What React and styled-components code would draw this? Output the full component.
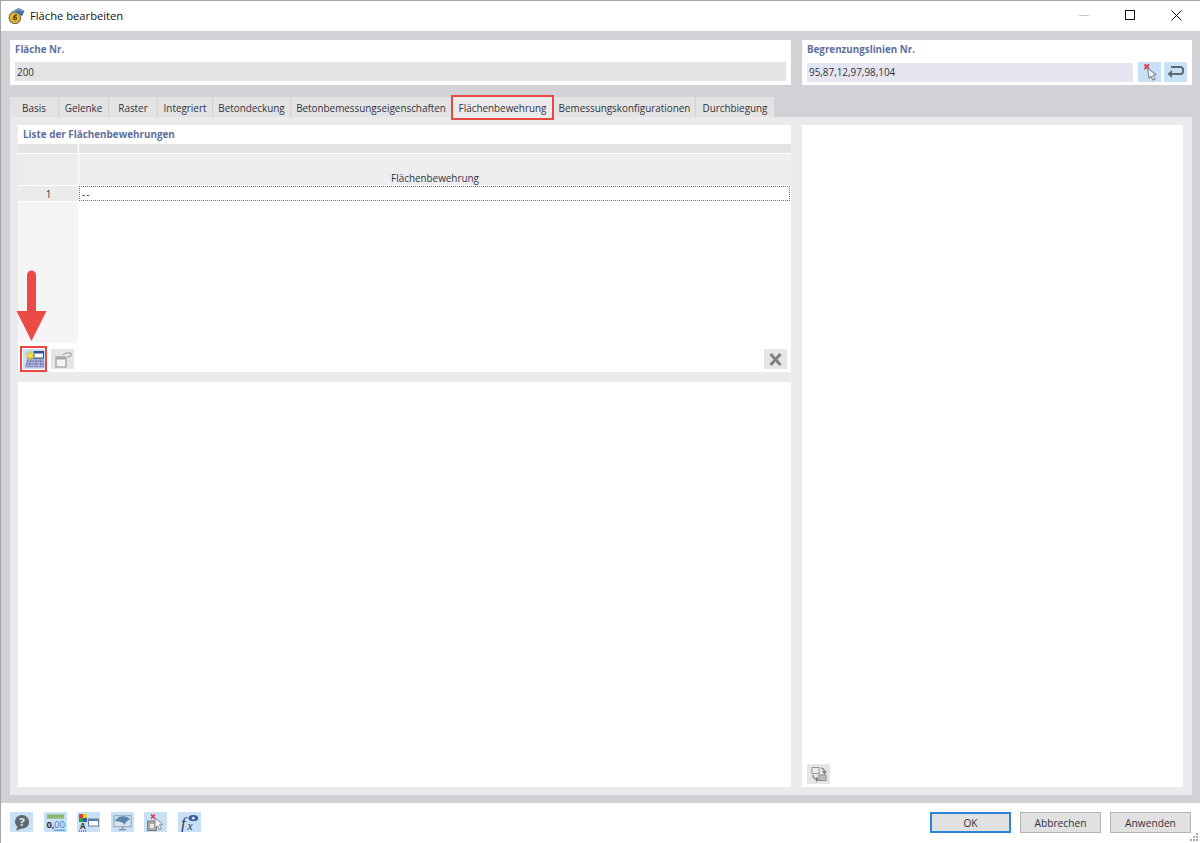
import React from "react"
import styled, { createGlobalStyle } from "styled-components"

const GlobalStyle = createGlobalStyle`
  html, body {
    margin: 0;
    padding: 0;
    background: #ffffff;
    overflow: hidden;
  }
  * {
    box-sizing: border-box;
  }
`
const Window = styled.div`
  width: 1200px;
  height: 843px;
  display: flex;
  flex-direction: column;
  border-top: 1px solid #a6a6a6;
  border-left: 1px solid #a6a6a6;
  background: #ffffff;
  font-family: "Open Sans", "Noto Sans", sans-serif;
  font-size: 9.9px;
  color: #33333d;
  position: relative;
`
const TitleBar = styled.div`
  height: 30px;
  display: flex;
  align-items: center;
  padding: 0 0 2px 7px;
  flex-shrink: 0;
`
const WindowTitle = styled.div`
  margin-left: 5px;
  flex-grow: 1;
  font-size: 11.2px;
  color: #111111;
`
const WindowControls = styled.div`
  display: flex;
  align-items: center;
  margin-right: 1px;
`
const WindowControl = styled.div`
  width: 46px;
  height: 28px;
  display: flex;
  justify-content: center;
  align-items: center;
`
const Body = styled.div`
  height: 772px;
  padding: 9px 8px 8px 9px;
  background: #d2d2d6;
  display: flex;
  flex-direction: column;
`
const TopRow = styled.div`
  display: flex;
  gap: 11px;
  height: 45px;
`
const FieldPanel = styled.div`
  width: ${props => props.$width}px;
  background: #ffffff;
  padding: 0 5px;
  display: flex;
  flex-direction: column;
`
const SectionLabel = styled.div`
  height: 18px;
  margin-bottom: 4px;
  display: flex;
  align-items: center;
  font-size: 9.8px;
  font-weight: 700;
  color: #5f6f9c;
`
const FieldRow = styled.div`
  display: flex;
  align-items: center;
`
const FieldValue = styled.div`
  height: 19px;
  flex-grow: 1;
  display: flex;
  align-items: center;
  padding-left: 2px;
  background: ${props => props.$bg};
`
const Tabs = styled.div`
  display: flex;
  gap: 1px;
  height: 20px;
  margin-top: 12px;
`
const Tab = styled.div`
  width: ${props => props.$width}px;
  display: flex;
  justify-content: center;
  align-items: center;
  padding-top: 1px;
  position: relative;
  background: ${props => (props.$active ? "#ebebeb" : "#e3e3e3")};
  ${props => props.$active && `
    &::after {
      content: "";
      position: absolute;
      inset: -2px -1px -3px -1px;
      border: 2.5px solid #e8483f;
    }
  `}
`
const TabPanel = styled.div`
  height: 678px;
  padding: 8px 9px 8px 8px;
  background: #ebebeb;
  display: flex;
  gap: 11px;
`
const LeftColumn = styled.div`
  width: 773px;
  display: flex;
  flex-direction: column;
  gap: 10px;
`
const RightColumn = styled.div`
  flex-grow: 1;
  background: #ffffff;
  display: flex;
  align-items: flex-end;
  padding: 0 0 3px 5px;
`
const ListPanel = styled.div`
  height: 247px;
  background: #ffffff;
  display: flex;
  flex-direction: column;
`
const ListTitle = styled.div`
  height: 19px;
  display: flex;
  align-items: center;
  padding: 0 0 1px 5px;
  font-size: 9.9px;
  font-weight: 700;
  color: #5f6f9c;
`
const Table = styled.div`
  height: 199px;
  display: grid;
  grid-template-columns: 60px 1fr;
  grid-template-rows: 9px 31px 15px 1fr;
  column-gap: 1px;
  row-gap: 1px;
`
const Strip = styled.div`
  background: #e4e4e4;
`
const HeaderCorner = styled.div`
  background: #ececec;
`
const HeaderCell = styled.div`
  background: #eeeeee;
  display: flex;
  justify-content: center;
  align-items: flex-end;
`
const RowNumber = styled.div`
  background: #ebebeb;
  display: flex;
  justify-content: center;
  align-items: center;
  padding-left: 1px;
`
const EditCell = styled.div`
  background: #ffffff;
  border: 1px dotted #707070;
  margin-right: 1px;
  display: flex;
  align-items: center;
  padding-left: 2px;
  letter-spacing: 1px;
`
const RowFiller = styled.div`
  background: #f5f5f5;
`
const Toolbar = styled.div`
  height: 29px;
  display: flex;
  align-items: flex-start;
  padding: 6px 4px 0 5px;
  gap: 5px;
`
const IconButton = styled.div`
  width: 23px;
  height: 20px;
  flex-shrink: 0;
  display: flex;
  justify-content: center;
  align-items: center;
  position: relative;
  background: ${props => (props.$disabled ? "#e6e6e6" : "#c8e1f6")};
  ${props => props.$pushRight && "margin-left: auto;"}
  ${props => props.$marked && `
    &::after {
      content: "";
      position: absolute;
      inset: -3px -1px -3px -3px;
      border: 2.5px solid #e8483f;
    }
  `}
`
const FieldButtons = styled.div`
  display: flex;
  gap: 3px;
  margin-left: 5px;
`
const DetailPanel = styled.div`
  flex-grow: 1;
  background: #ffffff;
`
const Arrow = styled.svg`
  position: absolute;
  left: 15px;
  top: 267px;
`
const Footer = styled.div`
  flex-grow: 1;
  display: flex;
  align-items: flex-start;
  padding: 9px 8px 0 9px;
`
const FooterIcons = styled.div`
  display: flex;
  gap: 10.6px;
  flex-grow: 1;
`
const FooterButtons = styled.div`
  display: flex;
  gap: 9px;
  margin-right: 1px;
`
const DialogButton = styled.div`
  width: 81px;
  height: 21px;
  display: flex;
  justify-content: center;
  align-items: center;
  background: #e1e1e1;
  font-size: 10.2px;
  border: ${props => (props.$primary ? "2px solid #2a86d8" : "1px solid #b4b4b4")};
`
const Grip = styled.svg`
  position: absolute;
  right: 1px;
  bottom: 1px;
`

const TitleIcon = () => (
  <svg width="17" height="17" viewBox="0 0 16 16">
    <circle cx="6.5" cy="10" r="5.5" fill="#e0b52c" stroke="#6f6a55" strokeWidth="1" />
    <path d="M8.5 7.6 C6.6 7.2 5.2 8.6 5.2 10.6 C5.2 12.4 8 12.4 8 10.6 C8 9.2 6 9.2 5.4 10.2" fill="none" stroke="#5a4a10" strokeWidth="1.2" />
    <path d="M3 4.5 L10 1 L15.5 3.5 L13.5 8.5 L9 6 Z" fill="#48709f" />
    <path d="M4 5 L10 2.2 L14 4" fill="none" stroke="#8fb0d2" strokeWidth="1" />
  </svg>
)
const PickIcon = () => (
  <svg width="23" height="20" viewBox="0 0 23 20">
    <path d="M6.5 2.5 L11 7 M11 2.5 L6.5 7" stroke="#e8333f" strokeWidth="1.8" />
    <path d="M9.5 6 L11 16 L13 14.5 L15 18 L17 17 L15 13.5 L18 12.5 Z" fill="#f4f4f4" stroke="#83888e" strokeWidth="1.1" />
  </svg>
)
const ReturnIcon = () => (
  <svg width="23" height="20" viewBox="0 0 23 20">
    <path d="M7 5 H16.5 C20 5 20 12 16.5 12 H5" fill="none" stroke="#5d6a75" strokeWidth="2" />
    <path d="M8 8 L3.5 12 L8 16 Z" fill="#5d6a75" />
  </svg>
)
const NewIcon = () => (
  <svg width="21" height="18" viewBox="0 0 21 18">
    <path d="M4 8 H19 L20 17 H1.5 Z" fill="#aab0d8" stroke="#7d84ad" strokeWidth="0.7" />
    <path d="M3 11 H19.5 M2.5 14 H20 M7 8 L5.5 17 M12 8 L12 17 M16 8 L17 17" stroke="#5a5f9c" strokeWidth="0.9" strokeDasharray="1.5 1.2" />
    <rect x="10" y="1.5" width="9.5" height="6.5" fill="#ffffff" stroke="#34507f" />
    <rect x="10" y="1.5" width="9.5" height="2" fill="#2c4f96" />
    <path d="M6.5 0.5 L7.5 3.5 L10.5 3 L8.7 5.5 L10.5 8 L7.5 7.5 L6.5 10.5 L5 7.5 L2 8 L3.8 5.5 L2 3 L5 3.5 Z" fill="#eee04a" stroke="#a9a92e" strokeWidth="0.5" />
  </svg>
)
const CopyIcon = () => (
  <svg width="21" height="18" viewBox="0 0 21 18">
    <rect x="4" y="7" width="10" height="10" fill="#f3f3f3" stroke="#8c8c8c" />
    <rect x="4" y="7" width="10" height="2.5" fill="#a8a8a8" />
    <path d="M11 5 L14 3 L19 3 L19 6 L15 7" fill="#e6e6e6" stroke="#9a9a9a" />
  </svg>
)
const DeleteIcon = () => (
  <svg width="23" height="19" viewBox="0 0 23 19">
    <path d="M6.5 4 L16.5 15 M16.5 4 L6.5 15" stroke="#808080" strokeWidth="3" />
  </svg>
)
const SwapIcon = () => (
  <svg width="23" height="20" viewBox="0 0 23 20">
    <rect x="5" y="3.5" width="7" height="6" fill="#ececec" stroke="#969696" />
    <rect x="12" y="11" width="7" height="5.5" fill="#bdbdbd" stroke="#8a8a8a" />
    <path d="M14 4 C16.5 4 17.5 6 17.5 8.5 M15.5 7 L17.5 9.5 L19.5 7" fill="none" stroke="#7a7a7a" strokeWidth="1.2" />
    <path d="M6 11 C6 14 7.5 15.5 10.5 15.5 M9 13.5 L11 15.5 L9 17.5" fill="none" stroke="#7a7a7a" strokeWidth="1.2" />
  </svg>
)
const HelpIcon = () => (
  <svg width="23" height="19" viewBox="0 0 23 19">
    <path d="M12 2 C16 2 19 5 19 9 C19 13 16 15.5 12 15.5 L6 17.5 L7.5 13.5 C5.5 12 5 10.5 5 9 C5 5 8 2 12 2 Z" fill="#63686b" />
    <text x="12" y="13" textAnchor="middle" fontFamily="Open Sans" fontWeight="800" fontSize="11" fill="#c8e1f6">?</text>
  </svg>
)
const NumberIcon = () => (
  <svg width="24" height="19" viewBox="0 0 24 19">
    <rect x="3" y="1" width="18" height="4.5" fill="#8db872" />
    <text x="2.5" y="15" fontFamily="Open Sans" fontWeight="700" fontSize="10" fill="#333333">0,</text>
    <text x="10.5" y="15" fontFamily="Open Sans" fontSize="10" fill="#3c7cdc">00</text>
    <path d="M10.5 17.5 H22" stroke="#3c7cdc" />
  </svg>
)
const DisplayIcon = () => (
  <svg width="23" height="19" viewBox="0 0 23 19">
    <rect x="2" y="1" width="4" height="4" fill="#e03b30" />
    <rect x="6" y="1" width="4" height="4" fill="#e6d02c" />
    <rect x="2" y="5" width="4" height="4" fill="#2f9e44" />
    <rect x="6" y="5" width="4" height="4" fill="#3058c0" />
    <text x="3" y="15.5" fontFamily="Open Sans" fontWeight="700" fontSize="8" fill="#333333">A</text>
    <path d="M2 18 H10" stroke="#333333" strokeDasharray="1 1" />
    <rect x="11.5" y="6" width="10" height="7" fill="#ffffff" stroke="#6d7f96" />
    <rect x="11.5" y="6" width="10" height="2" fill="#5a7fb0" />
  </svg>
)
const ViewIcon = () => (
  <svg width="24" height="19" viewBox="0 0 24 19">
    <rect x="3" y="2.5" width="18" height="11.5" fill="#d7e4ef" stroke="#8b9bab" />
    <path d="M4 8 C7 3 14 1 20 6 C17 7 15.5 9 14 12 C12.5 9 9 8.5 4 8 Z" fill="#5a86b0" />
    <path d="M12 14 V16.5 M8 17 H16" stroke="#7d8d9a" strokeWidth="1.4" />
  </svg>
)
const ClearIcon = () => (
  <svg width="23" height="19" viewBox="0 0 23 19">
    <path d="M7 1.5 L11 5.5 M11 1.5 L7 5.5" stroke="#e8333f" strokeWidth="1.6" />
    <rect x="3.5" y="8" width="9" height="9.5" fill="#a9a9a9" stroke="#7e7e7e" />
    <rect x="6" y="11" width="4" height="4" fill="#ececec" />
    <path d="M11 5 L11 15 L13.5 13 L15.5 17 L17.5 16 L15.5 12 L19 11.5 Z" fill="#f4f4f4" stroke="#85898f" />
  </svg>
)
const FormulaIcon = () => (
  <svg width="24" height="19" viewBox="0 0 24 19">
    <text x="3" y="16" fontFamily="Liberation Serif" fontStyle="italic" fontSize="17" fill="#333a50">f</text>
    <text x="10" y="17" fontFamily="Liberation Serif" fontStyle="italic" fontSize="12" fill="#333a50">x</text>
    <ellipse cx="16" cy="5" rx="5" ry="3.2" fill="#40609f" />
    <circle cx="16" cy="5" r="1.4" fill="#dbe7f2" />
  </svg>
)

const tabs = [
  { label: "Basis", width: 48 },
  { label: "Gelenke", width: 49 },
  { label: "Raster", width: 48 },
  { label: "Integriert", width: 54 },
  { label: "Betondeckung", width: 77 },
  { label: "Betonbemessungseigenschaften", width: 160 },
  { label: "Flächenbewehrung", width: 101, active: true },
  { label: "Bemessungskonfigurationen", width: 141 },
  { label: "Durchbiegung", width: 78 }
]

const App = () => {
  return (
    <Window>
      <GlobalStyle />
      <TitleBar>
        <TitleIcon />
        <WindowTitle>Fläche bearbeiten</WindowTitle>
        <WindowControls>
          <WindowControl>
            <svg width="10" height="10"><path d="M0 5.5 H10" stroke="#c8c8c8" /></svg>
          </WindowControl>
          <WindowControl>
            <svg width="10" height="10"><rect x="0.5" y="0.5" width="9" height="9" fill="none" stroke="#111111" /></svg>
          </WindowControl>
          <WindowControl>
            <svg width="11" height="11"><path d="M0.5 0.5 L10.5 10.5 M10.5 0.5 L0.5 10.5" stroke="#111111" /></svg>
          </WindowControl>
        </WindowControls>
      </TitleBar>
      <Body>
        <TopRow>
          <FieldPanel $width={781}>
            <SectionLabel>Fläche Nr.</SectionLabel>
            <FieldRow>
              <FieldValue $bg="#e4e4e4">200</FieldValue>
            </FieldRow>
          </FieldPanel>
          <FieldPanel $width={390}>
            <SectionLabel>Begrenzungslinien Nr.</SectionLabel>
            <FieldRow>
              <FieldValue $bg="#e5e6f1">95,87,12,97,98,104</FieldValue>
              <FieldButtons>
                <IconButton><PickIcon /></IconButton>
                <IconButton><ReturnIcon /></IconButton>
              </FieldButtons>
            </FieldRow>
          </FieldPanel>
        </TopRow>
        <Tabs>
          {tabs.map(tab => (
            <Tab key={tab.label} $width={tab.width} $active={tab.active}>{tab.label}</Tab>
          ))}
        </Tabs>
        <TabPanel>
          <LeftColumn>
            <ListPanel>
              <ListTitle>Liste der Flächenbewehrungen</ListTitle>
              <Table>
                <Strip />
                <Strip />
                <HeaderCorner />
                <HeaderCell>Flächenbewehrung</HeaderCell>
                <RowNumber>1</RowNumber>
                <EditCell>--</EditCell>
                <RowFiller />
                <div />
              </Table>
              <Toolbar>
                <IconButton $marked><NewIcon /></IconButton>
                <IconButton $disabled><CopyIcon /></IconButton>
                <IconButton $disabled $pushRight><DeleteIcon /></IconButton>
              </Toolbar>
            </ListPanel>
            <DetailPanel />
          </LeftColumn>
          <RightColumn>
            <IconButton $disabled><SwapIcon /></IconButton>
          </RightColumn>
        </TabPanel>
      </Body>
      <Footer>
        <FooterIcons>
          <IconButton><HelpIcon /></IconButton>
          <IconButton><NumberIcon /></IconButton>
          <IconButton><DisplayIcon /></IconButton>
          <IconButton><ViewIcon /></IconButton>
          <IconButton><ClearIcon /></IconButton>
          <IconButton><FormulaIcon /></IconButton>
        </FooterIcons>
        <FooterButtons>
          <DialogButton $primary>OK</DialogButton>
          <DialogButton>Abbrechen</DialogButton>
          <DialogButton>Anwenden</DialogButton>
        </FooterButtons>
      </Footer>
      <Arrow width="32" height="74" viewBox="0 0 32 74">
        <path d="M15.5 7 V45" stroke="#ec4a45" strokeWidth="9" strokeLinecap="round" />
        <path d="M0.5 43 H30.5 L15.5 73 Z" fill="#ec4a45" />
      </Arrow>
      <Grip width="10" height="10" viewBox="0 0 10 10">
        <path d="M7 1h2v2h-2z M4 4h2v2h-2z M7 4h2v2h-2z M1 7h2v2h-2z M4 7h2v2h-2z M7 7h2v2h-2z" fill="#a8a8a8" />
      </Grip>
    </Window>
  )
}

export default App
